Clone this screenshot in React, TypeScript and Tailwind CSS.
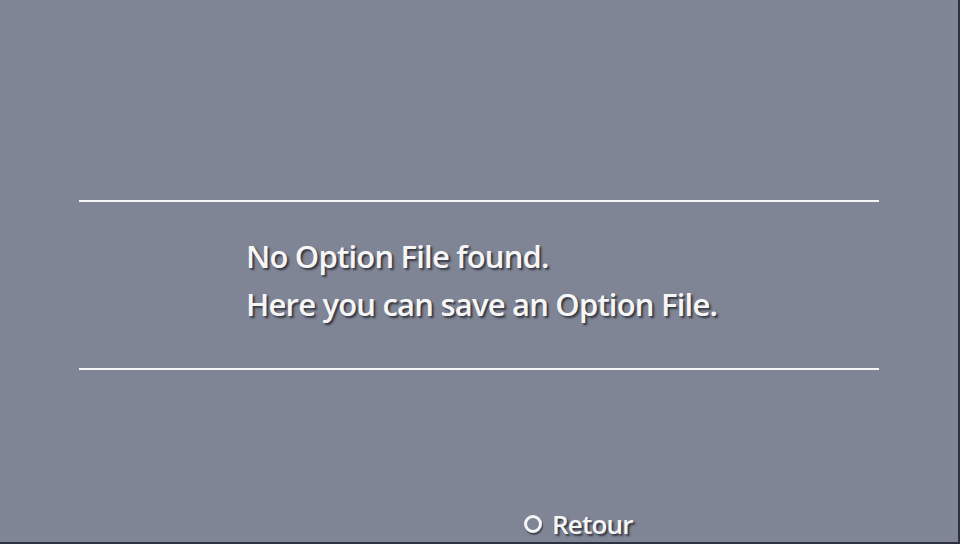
export default function App() {
    return (
        <div className="w-[960px] h-[544px] bg-[#7f8595] border-r-2 border-b-2 border-[#2e3140] flex flex-col overflow-hidden font-['Open_Sans','Noto_Sans',sans-serif]">
            {/* Message panel */}
            <div className="mt-[200px] ml-[79px] w-[800px] h-[170px] border-t-2 border-b-2 border-[#f4f4f4] pl-[167px] pt-[30px]">
                <div className="text-[#f6f6f6] text-[31px] leading-[48px] tracking-[-0.8px] font-semibold [text-shadow:2px_2px_2px_rgba(40,42,52,0.85)]">
                    <div>No Option File found.</div>
                    <div>Here you can save an Option File.</div>
                </div>
            </div>

            {/* Footer action */}
            <div className="mt-auto flex items-center gap-[10px] ml-[524px] mb-[2px]">
                <div className="w-[18px] h-[18px] rounded-full border-[3px] border-[#f6f6f6] shadow-[1px_2px_1px_rgba(40,42,52,0.7)]" />
                <span className="text-[#f6f6f6] text-[26px] leading-[32px] tracking-[-0.8px] font-semibold [text-shadow:2px_2px_2px_rgba(40,42,52,0.85)]">
                    Retour
                </span>
            </div>
        </div>
    );
}
